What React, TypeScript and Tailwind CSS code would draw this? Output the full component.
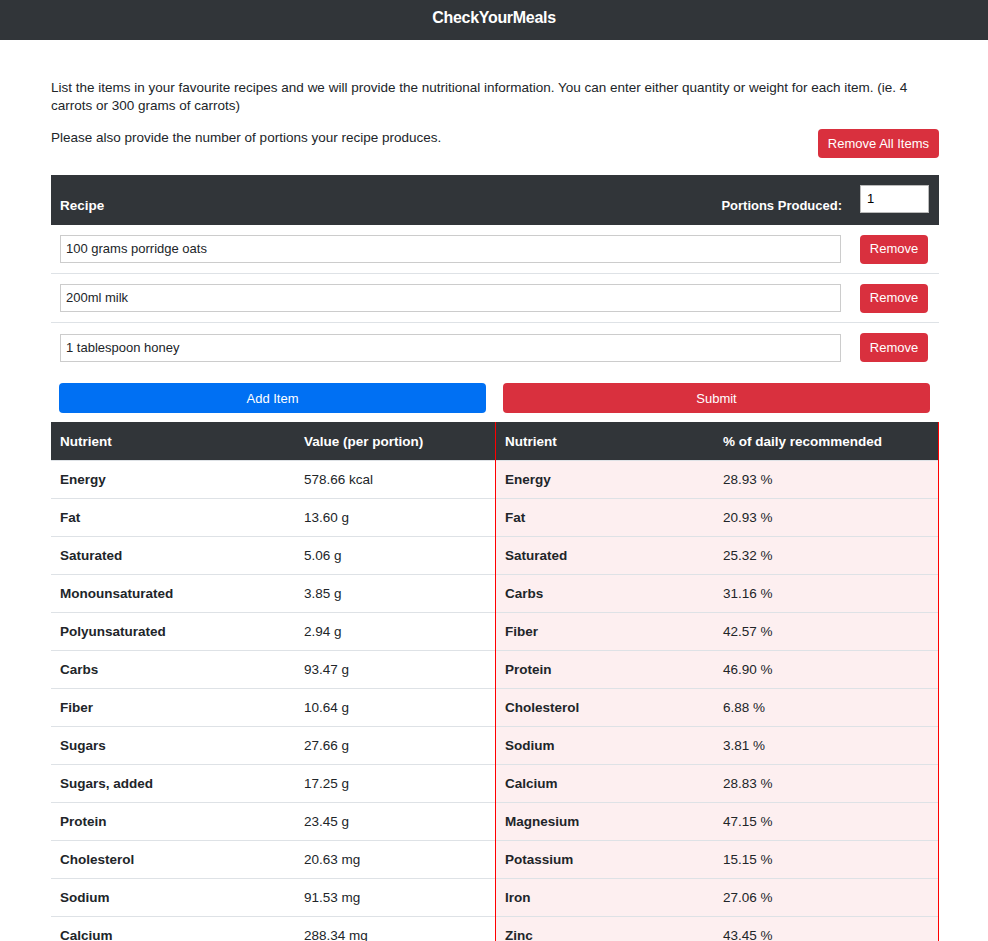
import React from 'react'

const items = ['100 grams porridge oats', '200ml milk', '1 tablespoon honey']

const values = [
  ['Energy', '578.66 kcal'],
  ['Fat', '13.60 g'],
  ['Saturated', '5.06 g'],
  ['Monounsaturated', '3.85 g'],
  ['Polyunsaturated', '2.94 g'],
  ['Carbs', '93.47 g'],
  ['Fiber', '10.64 g'],
  ['Sugars', '27.66 g'],
  ['Sugars, added', '17.25 g'],
  ['Protein', '23.45 g'],
  ['Cholesterol', '20.63 mg'],
  ['Sodium', '91.53 mg'],
  ['Calcium', '288.34 mg'],
]

const daily = [
  ['Energy', '28.93 %'],
  ['Fat', '20.93 %'],
  ['Saturated', '25.32 %'],
  ['Carbs', '31.16 %'],
  ['Fiber', '42.57 %'],
  ['Protein', '46.90 %'],
  ['Cholesterol', '6.88 %'],
  ['Sodium', '3.81 %'],
  ['Calcium', '28.83 %'],
  ['Magnesium', '47.15 %'],
  ['Potassium', '15.15 %'],
  ['Iron', '27.06 %'],
  ['Zinc', '43.45 %'],
]

export default function App() {
  return (
    <div className="min-h-screen bg-white text-[13.5px] leading-[18px] text-[#212529] font-['Liberation_Sans',Arial,sans-serif]">
      <nav className="h-[40px] bg-[#313539] flex items-center justify-center pb-[5px]">
        <span className="text-white font-bold text-[16px] tracking-[-0.3px]">CheckYourMeals</span>
      </nav>

      <div className="w-[888px] ml-[51px] pt-[39px]">
        <p className="mb-[15px]">
          List the items in your favourite recipes and we will provide the nutritional information. You can enter either quantity or weight for each item. (ie. 4 carrots or 300 grams of carrots)
        </p>
        <div className="flex items-start justify-between">
          <p className="-mt-[1px]">Please also provide the number of portions your recipe produces.</p>
          <button className="h-[29px] px-[10px] -mt-[1px] rounded-[4px] bg-[#d9303e] text-white text-[13px]">Remove All Items</button>
        </div>

        <div className="mt-[17px]">
          <div className="bg-[#313539] text-white font-bold flex items-end justify-between pt-[10px] pb-[11px] pl-[9px] pr-[10px]">
            <span className="leading-[18px] -mb-[1px]">Recipe</span>
            <div className="flex items-end gap-[18px]">
              <span className="text-[13px] -mb-[1px]">Portions Produced:</span>
              <div className="w-[69px] h-[28px] mb-[1px] bg-white border border-[#bbb] text-black font-normal text-[13px] pl-[6px] flex items-center">1</div>
            </div>
          </div>
          {items.map((item, i) => (
            <div
              key={item}
              className={
                'flex items-center h-[49px] pl-[9px] pr-[11px] ' +
                (i < items.length - 1 ? 'border-b border-[#dee2e6]' : '')
              }
            >
              <div className="w-[781px] h-[28px] border border-[#ccc] pl-[5px] flex items-center text-[13px]">{item}</div>
              <button className="ml-auto w-[68px] h-[29px] rounded-[4px] bg-[#d9303e] text-white text-[13px]">Remove</button>
            </div>
          ))}
        </div>

        <div className="grid grid-cols-2 mt-[11px]">
          <div className="pl-[8px] pr-[9px]">
            <button className="w-full h-[30px] pt-[1px] rounded-[4px] bg-[#0070f3] text-white text-[13px]">Add Item</button>
          </div>
          <div className="pl-[8px] pr-[9px]">
            <button className="w-full h-[30px] pt-[1px] rounded-[4px] bg-[#d9303e] text-white text-[13px]">Submit</button>
          </div>
        </div>

        <div className="grid grid-cols-2 mt-[9px]">
          <div>
            <div className="grid grid-cols-[244px_1fr] h-[38px] items-center bg-[#313539] text-white font-bold pt-[1px]">
              <span className="pl-[9px]">Nutrient</span>
              <span className="pl-[9px]">Value (per portion)</span>
            </div>
            {values.map(([n, v]) => (
              <div key={n} className="grid grid-cols-[244px_1fr] h-[38px] items-center border-t border-[#dee2e6]">
                <span className="pl-[9px] font-bold">{n}</span>
                <span className="pl-[9px]">{v}</span>
              </div>
            ))}
          </div>
          <div className="border-l border-r border-[#ff0000]">
            <div className="grid grid-cols-[218px_1fr] h-[38px] items-center bg-[#313539] text-white font-bold pt-[1px]">
              <span className="pl-[9px]">Nutrient</span>
              <span className="pl-[9px]">% of daily recommended</span>
            </div>
            {daily.map(([n, v]) => (
              <div key={n} className="grid grid-cols-[218px_1fr] h-[38px] items-center bg-[#fdeff0] border-t border-[#dee2e6]">
                <span className="pl-[9px] font-bold">{n}</span>
                <span className="pl-[9px]">{v}</span>
              </div>
            ))}
          </div>
        </div>
      </div>
    </div>
  )
}
